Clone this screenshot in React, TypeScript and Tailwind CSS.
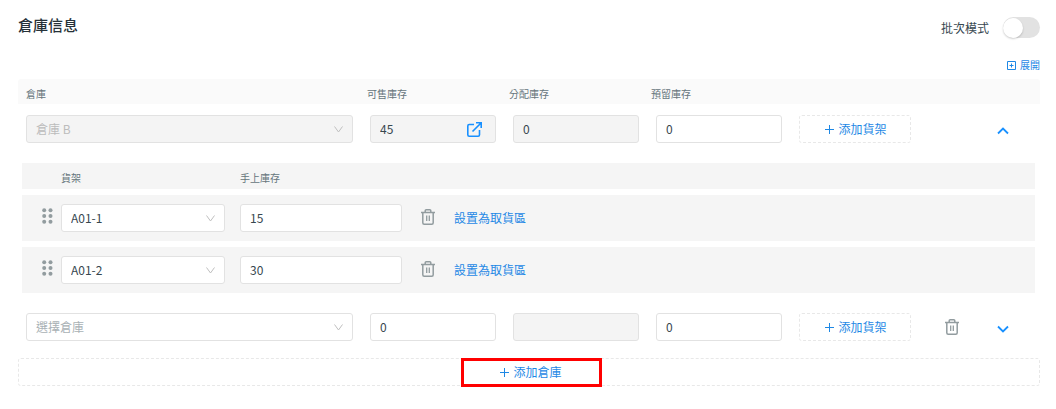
import React from 'react';

const shelves = [
    { name: 'A01-1', qty: '15' },
    { name: 'A01-2', qty: '30' },
];

function TrashIcon() {
    return (
        <svg width="14" height="16" viewBox="0 0 14 16" fill="none" stroke="#929c9f" strokeWidth="1.5" aria-hidden="true">
            <path d="M0 3.5h14M4.2 3.5V1.8c0-.6.4-1 1-1h3.6c.6 0 1 .4 1 1v1.7" />
            <path d="M1.8 3.5v10.2c0 .9.6 1.5 1.4 1.5h7.6c.8 0 1.4-.6 1.4-1.5V3.5" />
            <path d="M5.7 6.5v5.5M8.3 6.5v5.5" strokeWidth="1.3" />
        </svg>
    );
}

function DragIcon() {
    return (
        <svg width="11" height="16" viewBox="0 0 11 16" fill="#929c9f" aria-hidden="true">
            <circle cx="2.2" cy="2.2" r="2" />
            <circle cx="8.5" cy="2.2" r="2" />
            <circle cx="2.2" cy="8" r="2" />
            <circle cx="8.5" cy="8" r="2" />
            <circle cx="2.2" cy="13.8" r="2" />
            <circle cx="8.5" cy="13.8" r="2" />
        </svg>
    );
}

function ExternalIcon() {
    return (
        <svg width="15" height="15" viewBox="0 0 15 15" fill="none" stroke="#1890ff" strokeWidth="1.6" aria-hidden="true">
            <path d="M7 2.5H2.2C1.4 2.5.8 3.1.8 3.9v8.9c0 .8.6 1.4 1.4 1.4h8.9c.8 0 1.4-.6 1.4-1.4V8" />
            <path d="M9 .8h5.2V6M14 1L5.5 9.5" />
        </svg>
    );
}

function PlusIcon() {
    return (
        <svg width="9" height="9" viewBox="0 0 9 9" fill="none" stroke="currentColor" aria-hidden="true">
            <path d="M4.5 0v9M0 4.5h9" />
        </svg>
    );
}

function ToggleIcon({ up }: { up?: boolean }) {
    return (
        <svg width="12" height="8" viewBox="0 0 12 8" fill="none" stroke="#1890ff" strokeWidth="1.8" aria-hidden="true">
            <path d={up ? 'M1 6.5l5-5 5 5' : 'M1 1.5l5 5 5-5'} />
        </svg>
    );
}

function Select({ label, value, disabled, muted }: { label: string, value: string, disabled?: boolean, muted?: boolean }) {
    return (
        <div className="relative min-w-0">
            <select
                aria-label={label}
                disabled={disabled}
                className={`block h-7 w-full appearance-none rounded-[3px] border border-[#e2e2e2] px-[9px] opacity-100 ${disabled ? 'bg-[#f4f4f4] text-[#bcbcbc]' : muted ? 'bg-white text-[#a9b1b5]' : 'bg-white text-[#37474f]'}`}
            >
                <option>{value}</option>
            </select>
            <svg className="pointer-events-none absolute right-[10px] top-[11px]" width="9" height="7" viewBox="0 0 9 7" fill="none" stroke="#bfbfbf" aria-hidden="true">
                <path d="M.5 .5l4 5.5 4-5.5" />
            </svg>
        </div>
    );
}

function NumberBox({ label, value, disabled, link }: { label: string, value: string, disabled?: boolean, link?: boolean }) {
    return (
        <div className={`flex h-7 min-w-0 items-center rounded-[3px] border border-[#e2e2e2] ${disabled ? 'bg-[#f4f4f4]' : 'bg-white'}`}>
            <input
                type="text"
                aria-label={label}
                defaultValue={value}
                disabled={disabled}
                className="h-full w-full min-w-0 bg-transparent px-[9px] pb-[2px] text-[#37474f]"
            />
            {link && <a href="#" aria-label="查看庫存" className="mr-[13px] shrink-0"><ExternalIcon /></a>}
        </div>
    );
}

function AddShelfButton() {
    return (
        <button type="button" className="flex h-7 items-center justify-center gap-1 rounded-[3px] border border-dashed border-[#e8e8e8] pl-[2px] text-[#1e88e5]">
            <PlusIcon />添加貨架
        </button>
    );
}

const rowGrid = 'grid grid-cols-[327fr_126fr_126fr_126fr_112fr_48px_20px] items-center gap-[17px] pl-2 pr-[27px]';
const shelfGrid = 'grid grid-cols-[19px_179fr_162fr_52px_581fr] items-center bg-[#f5f5f5] pl-5';

export default function App() {
    return (
        <div className="w-full bg-white px-[18px] pt-[17px] pr-4 pb-6 font-['Noto_Sans_CJK_TC',sans-serif] text-[12px] leading-4 text-[#37474f]">
            <div className="flex items-start justify-between">
                <h2 className="text-[15px] leading-4 font-medium text-[#263238]">倉庫信息</h2>
                <label className="flex items-center gap-[14px]">
                    批次模式
                    <input type="checkbox" role="switch" className="peer sr-only" />
                    <span className="flex h-[21px] w-[37px] items-center rounded-full bg-[#e2e2e2]">
                        <span className="size-5 rounded-full bg-white shadow-[0_1px_2px_rgba(0,0,0,0.2)]" />
                    </span>
                </label>
            </div>
            <div className="mt-[19px] flex justify-end">
                <button type="button" className="flex items-center gap-1 text-[10px] leading-4 text-[#1e88e5]">
                    <svg width="9" height="9" viewBox="0 0 9 9" fill="none" stroke="currentColor" aria-hidden="true">
                        <path d="M.5 .5h8v8h-8zM4.5 2.5v4M2.5 4.5h4" />
                    </svg>
                    展開
                </button>
            </div>

            <div className="mt-[6px] grid h-[25px] grid-cols-[341fr_142fr_142fr_389fr] items-center rounded-t-[3px] bg-[#fafafa] pt-1 pl-2 text-[10px] text-[#66757c]">
                <span>倉庫</span>
                <span>可售庫存</span>
                <span>分配庫存</span>
                <span>預留庫存</span>
            </div>

            <div className={`mt-[11px] ${rowGrid}`}>
                <Select label="倉庫" value="倉庫 B" disabled />
                <NumberBox label="可售庫存" value="45" disabled link />
                <NumberBox label="分配庫存" value="0" disabled />
                <NumberBox label="預留庫存" value="0" />
                <AddShelfButton />
                <span />
                <button type="button" aria-label="收起" className="flex justify-center pt-1"><ToggleIcon up /></button>
            </div>

            <div className="mt-5 mr-[5px] ml-1 flex flex-col gap-[6px]">
                <div className={`h-[26px] pt-1 text-[10px] text-[#66757c] ${shelfGrid}`}>
                    <span />
                    <span>貨架</span>
                    <span>手上庫存</span>
                </div>
                {shelves.map((shelf) => (
                    <div key={shelf.name} className={`h-[46px] ${shelfGrid}`}>
                        <button type="button" aria-label="拖動排序" className="cursor-grab pb-1"><DragIcon /></button>
                        <div className="pr-[15px]"><Select label="貨架" value={shelf.name} /></div>
                        <NumberBox label="手上庫存" value={shelf.qty} />
                        <button type="button" aria-label="刪除貨架" className="flex justify-center pb-[2px]"><TrashIcon /></button>
                        <a href="#" className="text-[#1e88e5]">設置為取貨區</a>
                    </div>
                ))}
            </div>

            <div className={`mt-5 ${rowGrid}`}>
                <Select label="倉庫" value="選擇倉庫" muted />
                <NumberBox label="可售庫存" value="0" />
                <NumberBox label="分配庫存" value="" disabled />
                <NumberBox label="預留庫存" value="0" />
                <AddShelfButton />
                <button type="button" aria-label="刪除倉庫" className="flex justify-center"><TrashIcon /></button>
                <button type="button" aria-label="展開貨架" className="flex justify-center pt-1"><ToggleIcon /></button>
            </div>

            <button type="button" className="mt-[17px] flex h-7 w-full items-center justify-center rounded-[3px] border border-dashed border-[#e8e8e8] pl-1 text-[#1e88e5]">
                <span className="flex h-[29px] w-[141px] shrink-0 items-center justify-center gap-1 border-[3px] border-[#ff0000]">
                    <PlusIcon />添加倉庫
                </span>
            </button>
        </div>
    );
}
